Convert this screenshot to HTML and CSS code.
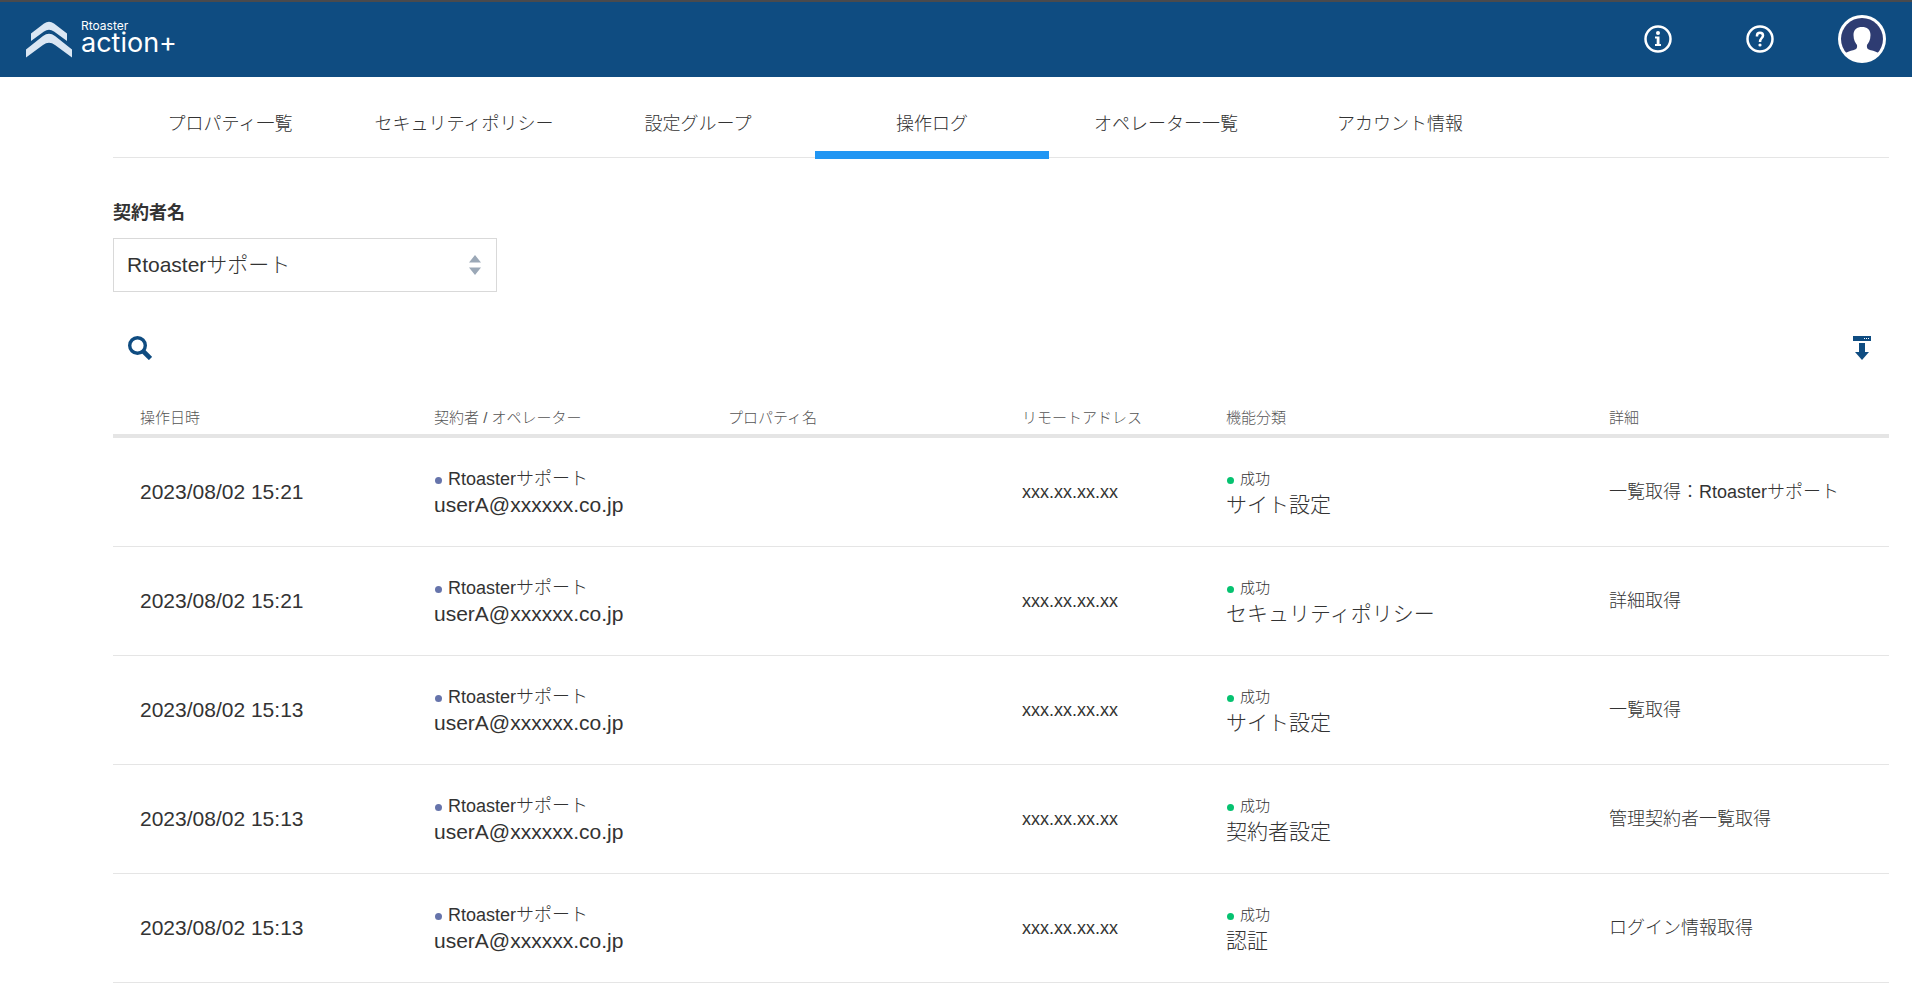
FILE: index.html
```html
<!DOCTYPE html>
<html lang="ja">
<head>
    <meta charset="UTF-8">
    <meta name="viewport" content="width=device-width, initial-scale=1.0">
    <title>操作ログ</title>
    <link rel="stylesheet" href="styles.css">
</head>
<body>
    <header class="header">
        <a class="logo" href="#">
            <svg class="logo-mark" width="46" height="38" viewBox="0 0 46 38" aria-hidden="true">
                <path d="M5 13.500 L18 3.500 Q23 0 28 3.500 L41 13.500 V21 L28 11.500 Q23 8 18 11.500 L5 21 Z"/>
                <path d="M0 29.500 L17 16 Q23 11.500 29 16 L46 29.500 V37.500 L29 25 Q23 20.500 17 25 L0 37.500 Z"/>
            </svg>
            <span class="logo-text">
                <span class="logo-brand">Rtoaster</span>
                <span class="logo-name">action+</span>
            </span>
        </a>
        <div class="header-menu">
            <button type="button" class="icon-button" aria-label="お知らせ">
                <svg width="28" height="28" viewBox="0 0 28 28" aria-hidden="true">
                    <circle cx="14" cy="14" r="12.500" fill="none" stroke="#fff" stroke-width="2.500"/>
                    <circle cx="14" cy="8" r="2" fill="#fff"/>
                    <path d="M11 11.500h4.500v7.500h1.500v2h-6v-2h1.700v-5.500H11z" fill="#fff"/>
                </svg>
            </button>
            <button type="button" class="icon-button" aria-label="ヘルプ">
                <svg width="28" height="28" viewBox="0 0 28 28" aria-hidden="true">
                    <circle cx="14" cy="14" r="12.500" fill="none" stroke="#fff" stroke-width="2.500"/>
                    <path d="M11 11.500V10.500C11 6.800 17 6.800 17 10.500C17 13 14 13.200 14 17" fill="none" stroke="#fff" stroke-width="2.500"/>
                    <circle cx="14" cy="20" r="1.600" fill="#fff"/>
                </svg>
            </button>
            <button type="button" class="icon-button" aria-label="アカウント">
                <svg width="48" height="48" viewBox="0 0 48 48" aria-hidden="true">
                    <circle cx="24" cy="24" r="24" fill="#fff"/>
                    <circle cx="24" cy="24" r="21" fill="#2e3c72"/>
                    <path d="M24 12C29 12 32.500 14.500 32.500 20C32.500 25 30.500 28 29 30C28.500 33.500 30 34.500 33 35.200C36 35.800 38.500 36.700 40.500 38C36 44 30 46 24 46S12 44 7.500 38C9.500 36.700 12 35.800 15 35.200C18 34.500 19.500 33.500 19 30C17.500 28 15.500 25 15.500 20C15.500 14.500 19 12 24 12Z" fill="#fff"/>
                </svg>
            </button>
        </div>
    </header>

    <main class="container">
        <nav class="tabs">
            <a class="tab" href="#">プロパティ一覧</a>
            <a class="tab" href="#">セキュリティポリシー</a>
            <a class="tab" href="#">設定グループ</a>
            <a class="tab active" href="#" aria-current="page">操作ログ</a>
            <a class="tab" href="#">オペレーター一覧</a>
            <a class="tab" href="#">アカウント情報</a>
        </nav>

        <div class="form-group">
            <label for="contractor">契約者名</label>
            <div class="select-wrap">
                <select id="contractor">
                    <option>Rtoasterサポート</option>
                </select>
                <svg class="select-arrow" width="12" height="20" viewBox="0 0 12 20" aria-hidden="true">
                    <path d="M6 0L12 7.500H0zM6 20L0 12.500H12z"/>
                </svg>
            </div>
        </div>

        <div class="toolbar">
            <button type="button" class="icon-button" aria-label="検索">
                <svg width="24" height="24" viewBox="0 0 24 24" aria-hidden="true">
                    <circle cx="9.500" cy="9.500" r="7.800" fill="none" stroke="#0f4c81" stroke-width="3.400"/>
                    <path d="M14.500 14.500L22.500 22.500" stroke="#0f4c81" stroke-width="4.600"/>
                </svg>
            </button>
            <button type="button" class="icon-button" aria-label="ダウンロード">
                <svg width="18" height="24" viewBox="0 0 18 24" aria-hidden="true">
                    <path d="M0 0h18v5H0z M6 7h6v9h4L9 24L2 16h4z" fill="#0f4c81"/>
                    <path d="M11 2h1v1h-1z M13 2h1v1h-1z M15 2h1v1h-1z" fill="#fff"/>
                </svg>
            </button>
        </div>

        <table class="log">
            <colgroup>
                <col class="col-wide">
                <col class="col-wide">
                <col class="col-wide">
                <col class="col-address">
                <col class="col-category">
                <col>
            </colgroup>
            <thead>
                <tr>
                    <th>操作日時</th>
                    <th>契約者 / オペレーター</th>
                    <th>プロパティ名</th>
                    <th>リモートアドレス</th>
                    <th>機能分類</th>
                    <th>詳細</th>
                </tr>
            </thead>
            <tbody>
                <tr>
                    <td class="large">2023/08/02 15:21</td>
                    <td><div class="contractor">Rtoasterサポート</div><div class="large">userA@xxxxxx.co.jp</div></td>
                    <td></td>
                    <td>xxx.xx.xx.xx</td>
                    <td><div class="status">成功</div><div class="large">サイト設定</div></td>
                    <td>一覧取得：Rtoasterサポート</td>
                </tr>
                <tr>
                    <td class="large">2023/08/02 15:21</td>
                    <td><div class="contractor">Rtoasterサポート</div><div class="large">userA@xxxxxx.co.jp</div></td>
                    <td></td>
                    <td>xxx.xx.xx.xx</td>
                    <td><div class="status">成功</div><div class="large">セキュリティポリシー</div></td>
                    <td>詳細取得</td>
                </tr>
                <tr>
                    <td class="large">2023/08/02 15:13</td>
                    <td><div class="contractor">Rtoasterサポート</div><div class="large">userA@xxxxxx.co.jp</div></td>
                    <td></td>
                    <td>xxx.xx.xx.xx</td>
                    <td><div class="status">成功</div><div class="large">サイト設定</div></td>
                    <td>一覧取得</td>
                </tr>
                <tr>
                    <td class="large">2023/08/02 15:13</td>
                    <td><div class="contractor">Rtoasterサポート</div><div class="large">userA@xxxxxx.co.jp</div></td>
                    <td></td>
                    <td>xxx.xx.xx.xx</td>
                    <td><div class="status">成功</div><div class="large">契約者設定</div></td>
                    <td>管理契約者一覧取得</td>
                </tr>
                <tr>
                    <td class="large">2023/08/02 15:13</td>
                    <td><div class="contractor">Rtoasterサポート</div><div class="large">userA@xxxxxx.co.jp</div></td>
                    <td></td>
                    <td>xxx.xx.xx.xx</td>
                    <td><div class="status">成功</div><div class="large">認証</div></td>
                    <td>ログイン情報取得</td>
                </tr>
            </tbody>
        </table>
    </main>
</body>
</html>
```
FILE: styles.css
```css
* {
    box-sizing: border-box;
}
body {
    margin: 0;
    background-color: #fff;
    color: #333;
    font-family: "Liberation Sans", "Noto Sans CJK JP", sans-serif;
    font-size: 18px;
    font-weight: 300;
    line-height: 26px;
}
a {
    color: inherit;
    text-decoration: none;
}
svg {
    display: block;
}

/* ヘッダー */
.header {
    display: flex;
    align-items: center;
    justify-content: space-between;
    height: 77px;
    padding: 0 26px 2px;
    border-top: 2px solid #4a4a4d;
    background-color: #0f4c81;
    color: #fff;
}
.logo {
    display: flex;
    align-items: center;
    gap: 9px;
}
.logo-mark {
    fill: #dae6f3;
}
.logo-text {
    display: flex;
    flex-direction: column;
    padding-bottom: 2px;
    font-family: Inter, sans-serif;
    font-weight: 400;
}
.logo-brand {
    font-size: 12px;
    line-height: 10px;
}
.logo-name {
    font-size: 27px;
    line-height: 24px;
}
.header-menu {
    display: flex;
    align-items: center;
    gap: 74px;
}
.header-menu .icon-button:last-child {
    margin-left: -10px;
}
.icon-button {
    padding: 0;
    border: none;
    background: none;
    cursor: pointer;
}

.container {
    padding: 0 23px 23px 113px;
}

/* タブ */
.tabs {
    display: flex;
    height: 81px;
    border-bottom: 1px solid #e5e5e5;
}
.tab {
    width: 234px;
    height: 82px;
    padding-top: 34px;
    text-align: center;
}
.tab.active {
    border-bottom: 8px solid #2196f3;
}

/* 契約者の選択 */
.form-group {
    margin-top: 42px;
}
.form-group label {
    display: block;
    margin-bottom: 12px;
    font-weight: bold;
}
.select-wrap {
    position: relative;
    width: 384px;
}
.select-wrap select {
    display: block;
    width: 100%;
    height: 54px;
    padding: 0 13px;
    border: 1px solid #d9d9d9;
    border-radius: 0;
    background-color: #fff;
    color: inherit;
    font: inherit;
    font-size: 21px;
    appearance: none;
}
.select-arrow {
    position: absolute;
    top: 17px;
    right: 16px;
    fill: #9ba8b7;
    pointer-events: none;
}

.toolbar {
    display: flex;
    justify-content: space-between;
    margin: 44px 0 34px;
    padding: 0 18px 0 15px;
}

/* 操作ログ */
.log {
    width: 100%;
    border-collapse: separate;
    border-spacing: 0;
    table-layout: fixed;
}
.col-wide {
    width: 294px;
}
.col-address {
    width: 204px;
}
.col-category {
    width: 383px;
}
.log th {
    height: 44px;
    padding: 11px 0 3px 27px;
    border-bottom: 4px solid #e5e5e5;
    color: #555;
    font-size: 15px;
    font-weight: 300;
    text-align: left;
}
.log td {
    height: 109px;
    padding: 0 0 0 27px;
    border-bottom: 1px solid #e5e5e5;
}
.large {
    font-size: 21px;
}
.contractor,
.status {
    display: flex;
    align-items: center;
    gap: 6px;
}
.contractor::before,
.status::before {
    content: "";
    width: 7px;
    height: 7px;
    margin: 2px 0 0 1px;
    border-radius: 50%;
    background-color: #6674ab;
}
.status {
    font-size: 15px;
}
.status::before {
    background-color: #05c270;
}
```
